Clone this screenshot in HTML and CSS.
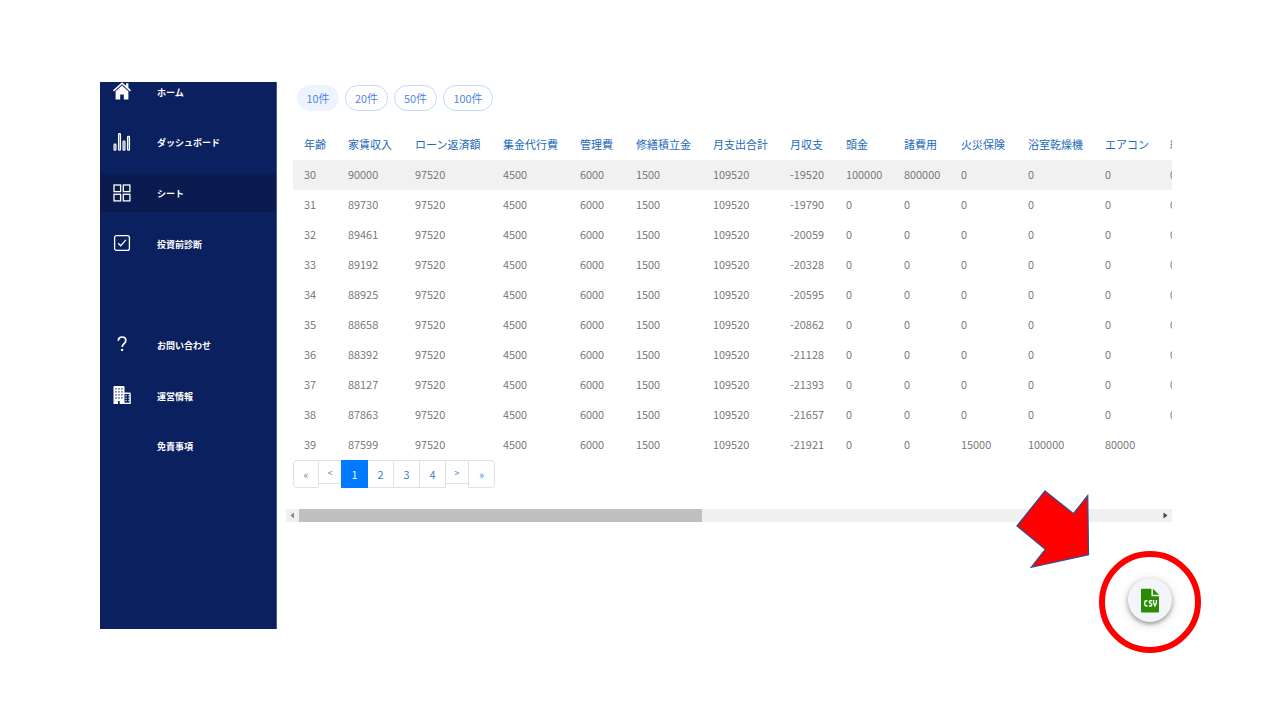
FILE: index.html
```html
<!DOCTYPE html>
<html lang="ja">
<head>
<meta charset="utf-8">
<title>シート</title>
<link rel="stylesheet" href="styles.css">
</head>
<body>
<div class="frame">
  <aside class="sidebar">
    <nav class="menu">
      <a class="menu-item" href="#"><svg class="icon" viewBox="0 0 18 18"><path fill="#fff" d="M9 3.600 2.600 9.300V17.400h4.600v-5h3.600v5h4.600V9.300zM9 .2 0 8.200l1 1.200L9 2.300l8 7.100 1-1.200-2.600-2.400V1.200h-2.300v2.600z"/></svg><span class="label">ホーム</span></a>
      <a class="menu-item" href="#"><svg class="icon" viewBox="0 0 18 18"><g fill="#7885ad" stroke="#fff" stroke-width="1.100"><rect x="1" y="11" width="2" height="6.300" rx=".8"/><rect x="5.500" y=".6" width="2" height="16.700" rx=".8"/><rect x="10" y="8" width="2" height="9.300" rx=".8"/><rect x="14.500" y="3.400" width="2" height="13.900" rx=".8"/></g></svg><span class="label">ダッシュボード</span></a>
      <a class="menu-item active" href="#"><svg class="icon" viewBox="0 0 18 18"><g fill="none" stroke="#fff" stroke-width="1.300"><rect x="1" y="1" width="6.600" height="6.600"/><rect x="10.300" y="1" width="6.600" height="6.600"/><rect x="1" y="10.300" width="6.600" height="6.600"/><rect x="10.300" y="10.300" width="6.600" height="6.600"/></g></svg><span class="label">シート</span></a>
      <a class="menu-item" href="#"><svg class="icon" viewBox="0 0 18 18"><g fill="none" stroke="#fff" stroke-width="1.300"><rect x="1.600" y="1.600" width="14.800" height="14.800" rx="2"/><path d="m5.200 9.200 2.500 2.600 5.200-5.900"/></g></svg><span class="label">投資前診断</span></a>
      <span class="gap"></span>
      <a class="menu-item" href="#"><svg class="icon" viewBox="0 0 18 18"><path fill="none" stroke="#fff" stroke-width="1.700" d="M5.300 5.800C5.300 3.500 6.900 2 9.100 2s3.700 1.400 3.700 3.400c0 3-3.600 3.400-3.600 6.500"/><circle cx="9.100" cy="14.900" r="1.200" fill="#fff"/></svg><span class="label">お問い合わせ</span></a>
      <a class="menu-item" href="#"><svg class="icon" viewBox="0 0 18 18"><path fill="#fff" fill-rule="evenodd" d="M1.500 0h9Q11.500 0 11.500 1v5.500h5.300q1 0 1 1V18H6.700v-3H5v3H.5V1q0-1 1-1zM11.500 8v8.700h4.900V8z"/><g stroke="#0b205f" stroke-width="1.200" stroke-dasharray="1.300 1.700"><path d="M2.300 2.800H11M2.300 5.800H11M2.300 8.800H11M2.300 11.800H11"/></g><path stroke="#fff" stroke-dasharray="1.300 1.500" d="M12.500 9.700h4M12.500 12.200h4M12.500 14.700h4"/></svg><span class="label">運営情報</span></a>
      <a class="menu-item" href="#"><span class="icon"></span><span class="label">免責事項</span></a>
    </nav>
  </aside>
  <main class="content">
    <div class="sizes">
      <button class="pill selected">10件</button>
      <button class="pill">20件</button>
      <button class="pill">50件</button>
      <button class="pill wide">100件</button>
    </div>
    <div class="table-view">
      <table class="sheet">
        <colgroup><col class="w44"><col class="w67"><col class="w88"><col class="w77"><col class="w56"><col class="w77"><col class="w77"><col class="w56"><col class="w58"><col class="w57"><col class="w67"><col class="w77"><col class="w65"><col class="w67"></colgroup>
        <thead><tr><th>年齢</th><th>家賃収入</th><th>ローン返済額</th><th>集金代行費</th><th>管理費</th><th>修繕積立金</th><th>月支出合計</th><th>月収支</th><th>頭金</th><th>諸費用</th><th>火災保険</th><th>浴室乾燥機</th><th>エアコン</th><th>給湯器</th></tr></thead>
        <tbody>
          <tr><td>30</td><td>90000</td><td>97520</td><td>4500</td><td>6000</td><td>1500</td><td>109520</td><td>-19520</td><td>100000</td><td>800000</td><td>0</td><td>0</td><td>0</td><td>0</td></tr>
          <tr><td>31</td><td>89730</td><td>97520</td><td>4500</td><td>6000</td><td>1500</td><td>109520</td><td>-19790</td><td>0</td><td>0</td><td>0</td><td>0</td><td>0</td><td>0</td></tr>
          <tr><td>32</td><td>89461</td><td>97520</td><td>4500</td><td>6000</td><td>1500</td><td>109520</td><td>-20059</td><td>0</td><td>0</td><td>0</td><td>0</td><td>0</td><td>0</td></tr>
          <tr><td>33</td><td>89192</td><td>97520</td><td>4500</td><td>6000</td><td>1500</td><td>109520</td><td>-20328</td><td>0</td><td>0</td><td>0</td><td>0</td><td>0</td><td>0</td></tr>
          <tr><td>34</td><td>88925</td><td>97520</td><td>4500</td><td>6000</td><td>1500</td><td>109520</td><td>-20595</td><td>0</td><td>0</td><td>0</td><td>0</td><td>0</td><td>0</td></tr>
          <tr><td>35</td><td>88658</td><td>97520</td><td>4500</td><td>6000</td><td>1500</td><td>109520</td><td>-20862</td><td>0</td><td>0</td><td>0</td><td>0</td><td>0</td><td>0</td></tr>
          <tr><td>36</td><td>88392</td><td>97520</td><td>4500</td><td>6000</td><td>1500</td><td>109520</td><td>-21128</td><td>0</td><td>0</td><td>0</td><td>0</td><td>0</td><td>0</td></tr>
          <tr><td>37</td><td>88127</td><td>97520</td><td>4500</td><td>6000</td><td>1500</td><td>109520</td><td>-21393</td><td>0</td><td>0</td><td>0</td><td>0</td><td>0</td><td>0</td></tr>
          <tr><td>38</td><td>87863</td><td>97520</td><td>4500</td><td>6000</td><td>1500</td><td>109520</td><td>-21657</td><td>0</td><td>0</td><td>0</td><td>0</td><td>0</td><td>0</td></tr>
          <tr><td>39</td><td>87599</td><td>97520</td><td>4500</td><td>6000</td><td>1500</td><td>109520</td><td>-21921</td><td>0</td><td>0</td><td>15000</td><td>100000</td><td>80000</td><td></td></tr>
        </tbody>
      </table>
    </div>
    <div class="pager">
      <button class="page muted">«</button><button class="page step muted">&lt;</button><button class="page current">1</button><button class="page">2</button><button class="page">3</button><button class="page">4</button><button class="page step">&gt;</button><button class="page">»</button>
    </div>
    <div class="scrollbar">
      <svg class="scroll-arrow" viewBox="0 0 13 13"><path fill="#888" d="M8 3.500v6L4.500 6.500z"/></svg>
      <div class="track"><div class="thumb"></div></div>
      <svg class="scroll-arrow" viewBox="0 0 13 13"><path fill="#444" d="M4.500 3.500v6l4-3z"/></svg>
    </div>
  </main>
  <svg class="pointer" viewBox="0 0 74 79"><path fill="#f00" stroke="#2f528f" stroke-width="1.300" d="M29 1 57.500 23.700 71.700 5.700 72.500 64.700 15.300 77.300 29.300 59.300 1 36z"/></svg>
  <div class="ring">
    <button class="fab" aria-label="CSV"><svg class="csv" viewBox="0 0 20 25"><path fill="#2a8b04" d="M1 0h10v8h8v16q0 1-1 1H1q-1 0-1-1V1q0-1 1-1zM12.500 0 19 6.500h-6.500z"/><g fill="none" stroke="#fff" stroke-width="1.500"><path d="M6.800 12.800H5.500q-1.500 0-1.500 1.500v2.500q0 1.500 1.500 1.500h1.300M11.700 12.800h-1.500q-1.400 0-1.400 1.200 0 1 1.300 1.500 1.300.4 1.300 1.500 0 1.300-1.300 1.300H8.300M13.200 12v2.800l1.500 3.200 1.500-3.200V12"/></g></svg></button>
  </div>
</div>
</body>
</html>
```
FILE: styles.css
```css
* { box-sizing: border-box; }
body {
  margin: 0;
  padding: 82px 80px 91px 100px;
  background: #fff;
  font-family: "Noto Sans CJK JP", sans-serif;
  font-size: 11px;
  font-weight: 350;
}
button { margin: 0; font: inherit; cursor: pointer; }
.frame {
  position: relative;
  display: flex;
  min-height: 547px;
}
.sidebar {
  flex: 0 0 177px;
  overflow: hidden;
  background: #0b205f;
  border-right: 1px solid #46568a;
}
.menu {
  display: grid;
  grid-template-rows: repeat(8, 1fr);
  align-items: center;
  height: 405px;
  margin-top: -16px;
}
.menu-item {
  display: flex;
  align-items: center;
  gap: 26px;
  height: 38px;
  padding-left: 13px;
  color: #fff;
  font-size: 9px;
  font-weight: 700;
  text-decoration: none;
}
.menu-item.active { background: #0b1b50; }
.icon { width: 18px; height: 18px; }
.label { padding-top: 2px; }
.content {
  flex: 1;
  min-width: 0;
  padding: 3px 28px 0 9px;
}
.sizes { display: flex; gap: 6px; padding-left: 11px; }
.pill {
  width: 43px;
  height: 26px;
  padding: 0 0 1px;
  border: 1px solid #c5d8fb;
  border-radius: 13px;
  background: #fff;
  color: #4480e0;
}
.pill.selected { width: 42px; background: #edf4ff; border-color: #edf4ff; }
.pill.wide { width: 50px; }
.table-view { overflow: hidden; margin: 19px 0 0 7px; }
.sheet {
  width: 933px;
  table-layout: fixed;
  border-collapse: collapse;
}
.w44 { width: 44px; }
.w56 { width: 56px; }
.w57 { width: 57px; }
.w58 { width: 58px; }
.w65 { width: 65px; }
.w67 { width: 67px; }
.w77 { width: 77px; }
.w88 { width: 88px; }
.sheet th, .sheet td {
  height: 30px;
  padding: 0 0 2px 11px;
  line-height: 16px;
  text-align: left;
  white-space: nowrap;
  color: #707070;
}
.sheet th { color: #1c69b8; font-weight: 400; }
.sheet tbody tr:first-child { background: #f1f1f1; }
.pager { display: flex; align-items: flex-start; padding-left: 7px; }
.page {
  width: 27px;
  height: 28px;
  margin-left: -1px;
  padding: 0;
  border: 1px solid #dee2e6;
  background: #fff;
  color: #2878c8;
}
.page:first-child { width: 26px; margin-left: 0; border-radius: 4px 0 0 4px; }
.page:last-child { border-radius: 0 4px 4px 0; }
.page.step { width: 24px; height: 24px; font-size: 9px; }
.page.muted { color: #6c757d; }
.page.current { z-index: 1; background: #007bff; border-color: #007bff; color: #fff; }
.scrollbar { display: flex; height: 13px; margin-top: 21px; background: #f0f0f0; }
.scroll-arrow { width: 13px; height: 13px; }
.track { flex: 1; }
.thumb { width: 403px; max-width: 100%; height: 13px; background: #c0c0c0; }
.pointer {
  position: absolute;
  right: 110px;
  top: 408px;
  width: 74px;
  height: 79px;
}
.ring {
  position: absolute;
  right: -1px;
  top: 469px;
  display: grid;
  place-items: center;
  width: 102px;
  height: 102px;
  padding-bottom: 4px;
  border: 6px solid #f00;
  border-radius: 50%;
}
.fab {
  display: grid;
  place-items: center;
  width: 44px;
  height: 44px;
  padding: 0;
  border: 0;
  border-radius: 50%;
  background: #f4f5fa;
  box-shadow: 0 2px 4px rgba(0, 0, 0, 0.35), 0 2px 12px rgba(0, 0, 0, 0.14);
}
.csv { width: 19px; height: 25px; }
```
